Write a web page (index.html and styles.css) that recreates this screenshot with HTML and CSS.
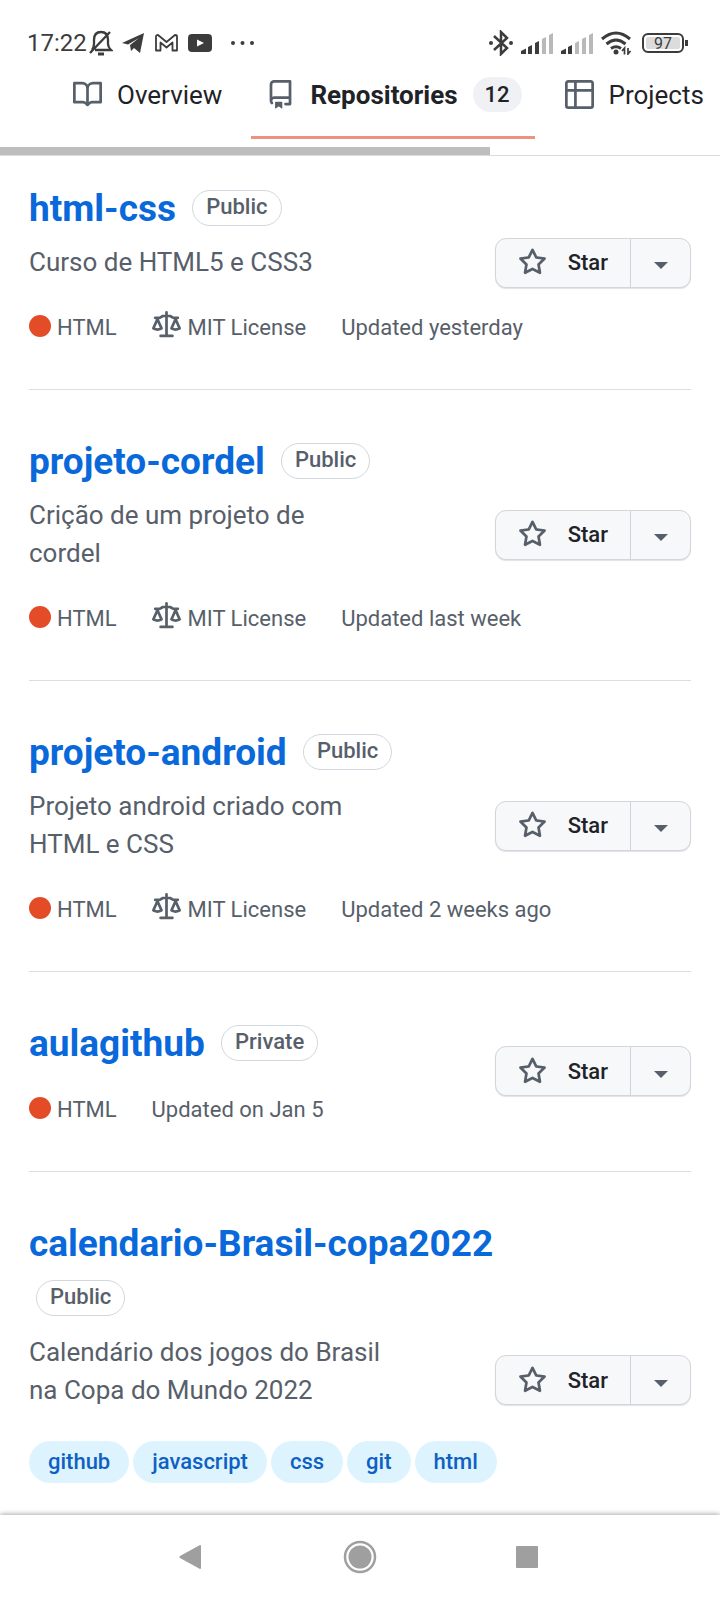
FILE: index.html
```html
<!DOCTYPE html>
<html lang="en">
<head>
<meta charset="utf-8">
<meta name="viewport" content="width=device-width, initial-scale=1">
<title>Repositories</title>
<link rel="stylesheet" href="styles.css">
</head>
<body>
<svg class="sprite" aria-hidden="true">
  <symbol id="star" viewBox="0 0 16 16"><path d="M8 .25a.75.75 0 0 1 .673.418l1.882 3.815 4.21.612a.75.75 0 0 1 .416 1.279l-3.046 2.97.719 4.192a.751.751 0 0 1-1.088.791L8 12.347l-3.766 1.98a.75.75 0 0 1-1.088-.79l.72-4.194L.818 6.374a.75.75 0 0 1 .416-1.28l4.21-.611L7.327.668A.75.75 0 0 1 8 .25Zm0 2.445L6.615 5.5a.75.75 0 0 1-.564.41l-3.097.45 2.24 2.184a.75.75 0 0 1 .216.664l-.528 3.084 2.769-1.456a.75.75 0 0 1 .698 0l2.77 1.456-.53-3.084a.75.75 0 0 1 .216-.664l2.24-2.183-3.096-.45a.75.75 0 0 1-.564-.41L8 2.694Z"/></symbol>
  <symbol id="law" viewBox="0 0 16 16"><path d="M8.75.75V2h.985c.304 0 .603.08.867.231l1.29.736c.038.022.08.033.124.033h2.234a.75.75 0 0 1 0 1.5h-.427l2.111 4.692a.75.75 0 0 1-.154.838l-.53-.53.529.531-.001.002-.002.002-.006.006-.006.005-.01.01-.045.04c-.21.176-.441.327-.686.45C14.556 10.78 13.88 11 13 11a4.498 4.498 0 0 1-2.023-.454 3.544 3.544 0 0 1-.686-.45l-.045-.04-.016-.015-.006-.006-.004-.004v-.001a.75.75 0 0 1-.154-.838L12.178 4.5h-.162c-.305 0-.604-.079-.868-.231l-1.29-.736a.245.245 0 0 0-.124-.033H8.75V13h2.5a.75.75 0 0 1 0 1.5h-6.5a.75.75 0 0 1 0-1.5h2.5V3.5h-.984a.245.245 0 0 0-.124.033l-1.289.737c-.265.15-.564.23-.869.23h-.162l2.112 4.692a.75.75 0 0 1-.154.838l-.53-.53.529.531-.001.002-.002.002-.006.006-.016.015-.045.04c-.21.176-.441.327-.686.45C4.556 10.78 3.88 11 3 11a4.498 4.498 0 0 1-2.023-.454 3.544 3.544 0 0 1-.686-.45l-.045-.04-.016-.015-.006-.006-.004-.004v-.001a.75.75 0 0 1-.154-.838L2.178 4.5H1.75a.75.75 0 0 1 0-1.5h2.234a.249.249 0 0 0 .125-.033l1.288-.737c.265-.15.564-.23.869-.23h.984V.75a.75.75 0 0 1 1.5 0Zm2.945 8.477c.285.135.718.273 1.305.273s1.02-.138 1.305-.273L13 6.327Zm-10 0c.285.135.718.273 1.305.273s1.02-.138 1.305-.273L3 6.327Z"/></symbol>
</svg>

<div class="status">
  <div class="status-group">
    <span class="clock">17:22</span>
    <svg class="s-bell" viewBox="0 0 24 26" width="24" height="26" fill="none" stroke="#3c3c3c" stroke-width="2"><path d="M6 20H22Q19 17 19 14V10Q19 2 12 2Q5 2 5 10V14Q5 17 3 20M1 23 21 2" stroke-width="2.300"/><path d="M9 24h6" stroke-width="3"/></svg>
    <svg class="s-plane" viewBox="0 0 22 20" width="22" height="20" fill="#3c3c3c"><path d="M0 10 22 0 18 20 12 15 9 18 8 12 17 5 6 11.500Z"/></svg>
    <svg class="s-mail" viewBox="0 0 23 18" width="23" height="18" fill="none" stroke="#3c3c3c" stroke-width="1.800" stroke-linejoin="round"><path d="M1 16.500V2.500Q1 1 3 1L11.500 8 20 1Q22 1 22 2.500V16.500H17.500V8.500L11.500 13.500 5.500 8.500V16.500Z"/></svg>
    <svg class="s-video" viewBox="0 0 24 18" width="24" height="18"><rect width="24" height="18" rx="4" fill="#3c3c3c"/><path d="M9 5.500 16 9 9 12.500Z" fill="#fff"/></svg>
    <svg class="s-dots" viewBox="0 0 24 4" width="24" height="4" fill="#3c3c3c"><circle cx="2" cy="2" r="2"/><circle cx="11.500" cy="2" r="2"/><circle cx="21" cy="2" r="2"/></svg>
  </div>
  <div class="status-group status-right">
    <svg viewBox="0 0 24 26" width="24" height="26" fill="none" stroke="#3c3c3c" stroke-width="2.500"><path d="M5 6 18 18 12 24V2L18 8 5 20"/><g fill="#3c3c3c" stroke="none"><circle cx="2" cy="13" r="2"/><circle cx="22" cy="13" r="2"/></g></svg>
    <svg viewBox="0 0 32 21" width="32" height="21" fill="#3c3c3c"><path d="M0 21V18L5 15.500V21ZM7 21V14L11 12V21ZM14 21V10L18 8V21Z"/><path fill="#b9b9b9" d="M21 21V6L25 4V21ZM28 21V2L32 0V21Z"/></svg>
    <svg viewBox="0 0 32 21" width="32" height="21" fill="#3c3c3c"><path d="M0 21V18L5 15.500V21ZM7 21V14L11 12V21Z"/><path fill="#b9b9b9" d="M14 21V10L18 8V21ZM21 21V6L25 4V21ZM28 21V2L32 0V21Z"/></svg>
    <svg viewBox="0 0 31 24" width="31" height="24" fill="none" stroke="#3c3c3c" stroke-width="3"><path d="M1 8Q15 -4 29 8M5.500 13Q15 5 24.500 13M10 17.500Q15 14 20 17.500"/><circle cx="15" cy="21" r="2.500" fill="#3c3c3c" stroke="none"/><path d="M23.500 23.500V17L21 20M27 17V23L29.500 20" stroke-width="1.700"/></svg>
    <span class="battery">97</span>
  </div>
</div>

<nav class="tabs" aria-label="User">
  <a class="tab" href="#"><svg viewBox="0 0 16 16" width="29" height="29"><path d="M0 1.750A.75.75 0 0 1 .75 1h4.253c1.227 0 2.317.59 3 1.501A3.744 3.744 0 0 1 11.006 1h4.245a.75.75 0 0 1 .75.75v10.500a.75.75 0 0 1-.75.75h-4.507a2.250 2.250 0 0 0-1.591.659l-.622.621a.75.75 0 0 1-1.060 0l-.622-.621A2.250 2.250 0 0 0 5.258 13H.75a.75.75 0 0 1-.75-.75Zm7.251 10.324.004-5.073-.002-2.253A2.250 2.250 0 0 0 5.003 2.500H1.500v9h3.757a3.750 3.750 0 0 1 1.994.574ZM8.755 4.750l-.004 7.322a3.752 3.752 0 0 1 1.992-.572H14.500v-9h-3.495a2.250 2.250 0 0 0-2.250 2.250Z"/></svg>Overview</a>
  <a class="tab current" href="#" aria-current="page"><svg viewBox="0 0 16 16" width="29" height="29"><path d="M2 2.500A2.500 2.500 0 0 1 4.500 0h8.750a.75.75 0 0 1 .75.75v12.500a.75.75 0 0 1-.75.75h-2.500a.75.75 0 0 1 0-1.500h1.750v-2h-8a1 1 0 0 0-.714 1.700.75.75 0 1 1-1.072 1.050A2.495 2.495 0 0 1 2 11.500Zm10.500-1h-8a1 1 0 0 0-1 1v6.708A2.486 2.486 0 0 1 4.500 9h8ZM5 12.250a.25.25 0 0 1 .25-.25h3.500a.25.25 0 0 1 .25.25v3.250a.25.25 0 0 1-.4.2l-1.450-1.087a.249.249 0 0 0-.3 0L5.400 15.700a.25.25 0 0 1-.4-.2Z"/></svg>Repositories<span class="counter">12</span></a>
  <a class="tab" href="#"><svg viewBox="0 0 16 16" width="29" height="29"><path d="M0 1.750C0 .784.784 0 1.750 0h12.500C15.216 0 16 .784 16 1.750v12.500A1.750 1.750 0 0 1 14.250 16H1.750A1.750 1.750 0 0 1 0 14.250ZM6.500 6.500v8h7.750a.25.25 0 0 0 .25-.25V6.500Zm8-1.500V1.750a.25.25 0 0 0-.25-.25H6.500V5Zm-13 1.500v7.750c0 .138.112.25.25.25H5v-8ZM5 5V1.500H1.750a.25.25 0 0 0-.25.25V5Z"/></svg>Projects</a>
</nav>
<div class="scroll-track"><div class="scroll-thumb"></div></div>

<main class="repos">
  <article class="repo">
    <div class="info">
      <h3><a href="#">html-css</a> <span class="pill">Public</span></h3>
      <p class="desc">Curso de HTML5 e CSS3</p>
      <div class="meta"><span class="lang">HTML</span><span class="license"><svg width="29" height="29"><use href="#law"/></svg>MIT License</span><span>Updated yesterday</span></div>
    </div>
    <div class="star-group"><button class="star"><svg width="29" height="29"><use href="#star"/></svg>Star</button><button class="caret" aria-label="Add to list"></button></div>
  </article>
  <article class="repo">
    <div class="info">
      <h3><a href="#">projeto-cordel</a> <span class="pill">Public</span></h3>
      <p class="desc">Crição de um projeto de cordel</p>
      <div class="meta"><span class="lang">HTML</span><span class="license"><svg width="29" height="29"><use href="#law"/></svg>MIT License</span><span>Updated last week</span></div>
    </div>
    <div class="star-group"><button class="star"><svg width="29" height="29"><use href="#star"/></svg>Star</button><button class="caret" aria-label="Add to list"></button></div>
  </article>
  <article class="repo">
    <div class="info">
      <h3><a href="#">projeto-android</a> <span class="pill">Public</span></h3>
      <p class="desc">Projeto android criado com HTML e CSS</p>
      <div class="meta"><span class="lang">HTML</span><span class="license"><svg width="29" height="29"><use href="#law"/></svg>MIT License</span><span>Updated 2 weeks ago</span></div>
    </div>
    <div class="star-group"><button class="star"><svg width="29" height="29"><use href="#star"/></svg>Star</button><button class="caret" aria-label="Add to list"></button></div>
  </article>
  <article class="repo">
    <div class="info">
      <h3><a href="#">aulagithub</a> <span class="pill">Private</span></h3>
      <div class="meta"><span class="lang">HTML</span><span>Updated on Jan 5</span></div>
    </div>
    <div class="star-group"><button class="star"><svg width="29" height="29"><use href="#star"/></svg>Star</button><button class="caret" aria-label="Add to list"></button></div>
  </article>
  <article class="repo">
    <div class="info">
      <h3><a href="#">calendario-Brasil-copa2022</a> <span class="pill">Public</span></h3>
      <p class="desc">Calendário dos jogos do Brasil na Copa do Mundo 2022</p>
      <div class="tags"><a href="#">github</a><a href="#">javascript</a><a href="#">css</a><a href="#">git</a><a href="#">html</a></div>
      <div class="meta"><span class="lang other"></span></div>
    </div>
    <div class="star-group"><button class="star"><svg width="29" height="29"><use href="#star"/></svg>Star</button><button class="caret" aria-label="Add to list"></button></div>
  </article>
</main>

<footer class="navbar">
  <button aria-label="Back"><svg viewBox="0 0 34 34" width="34" height="34" fill="#9f9f9f"><path d="M4 16 24 5Q25 5 25 6V28Q25 29 24 29L4 18Q2.500 17 4 16Z"/></svg></button>
  <button aria-label="Home"><svg viewBox="0 0 34 34" width="34" height="34" fill="#9f9f9f"><circle cx="17" cy="17" r="15" fill="none" stroke="#9f9f9f" stroke-width="2.500"/><circle cx="17" cy="17" r="11.500"/></svg></button>
  <button aria-label="Recents"><svg viewBox="0 0 34 34" width="34" height="34" fill="#9f9f9f"><rect x="6" y="6" width="22" height="22" rx="1"/></svg></button>
</footer>
</body>
</html>
```

FILE: styles.css
```css
* { box-sizing: border-box; }

body {
  margin: 0;
  height: 100vh;
  display: flex;
  flex-direction: column;
  overflow: hidden;
  background: #fff;
  color: #1f2328;
  font-family: Roboto, sans-serif;
  font-size: 26px;
}

a { color: inherit; text-decoration: none; }
button { font: inherit; color: inherit; background: none; border: 0; padding: 0; }
svg { flex: none; display: block; }
.sprite { position: absolute; width: 0; height: 0; }

.status {
  display: flex;
  justify-content: space-between;
  align-items: center;
  padding: 28px 36px 0 27px;
  height: 58px;
  flex: none;
  color: #3c3c3c;
}
.status-group { display: flex; align-items: center; }
.status-right { gap: 8px; }
.clock { font-size: 24px; line-height: 28px; }
.s-bell { margin-left: 2px; }
.s-plane { margin-left: 9px; }
.s-mail { margin-left: 11px; }
.s-video { margin-left: 10px; }
.s-dots { margin-left: 19px; }
.battery {
  position: relative;
  width: 42px;
  height: 20px;
  border: 2px solid #3c3c3c;
  border-radius: 6px;
  background: #dcdcdc;
  box-shadow: inset 0 0 0 2px #fff;
  font-size: 16px;
  line-height: 17px;
  text-align: center;
  margin-left: 2px;
}
.battery::after {
  content: "";
  position: absolute;
  right: -6px;
  top: 5px;
  width: 3px;
  height: 6px;
  background: #3c3c3c;
}

.tabs {
  display: flex;
  gap: 15px;
  padding-left: 58px;
  height: 81px;
  flex: none;
  overflow: hidden;
}
.tab {
  display: flex;
  align-items: center;
  gap: 15px;
  padding: 0 14px 5px 15px;
  border-bottom: 3px solid transparent;
  white-space: nowrap;
}
.tab svg { fill: #57606a; }
.tab.current { padding-right: 13px; font-weight: 700; border-color: #ec9280; }
.counter {
  padding: 0 12px;
  border-radius: 18px;
  background: #f0f1f4;
  font-size: 22px;
  font-weight: 500;
  line-height: 35px;
}

.scroll-track { flex: none; margin-top: 8px; border-bottom: 1px solid #d8dbdf; }
.scroll-thumb { width: 68%; height: 8px; background: #bebebe; }

.repos {
  flex: 1;
  min-height: 0;
  overflow: hidden;
  padding: 0 29px;
}
.repo {
  display: flex;
  align-items: center;
  padding: 44px 0 45px;
  border-bottom: 1px solid #d8dee4;
}
.repo:first-child { padding-top: 25px; }
.info { display: flex; flex-direction: column; flex: 1; min-width: 0; }

h3 { margin: 0 0 7px; font-size: 37px; line-height: 55px; font-weight: 700; color: #0969da; }
.pill {
  display: inline-block;
  margin-left: 7px;
  padding: 0 13px 2px;
  border: 1px solid #d0d7de;
  border-radius: 18px;
  color: #57606a;
  font-size: 22px;
  line-height: 32px;
  font-weight: 500;
  vertical-align: 7px;
}
.desc { margin: 0 0 15px; max-width: 352px; line-height: 38px; color: #57606a; }

.meta {
  display: flex;
  gap: 35px;
  margin-top: 15px;
  height: 33px;
  font-size: 22px;
  line-height: 33px;
  color: #57606a;
  white-space: nowrap;
}
.lang, .license { display: flex; gap: 6px; }
.license { gap: 7px; }
.license svg { fill: #57606a; }
.lang::before {
  content: "";
  width: 22px;
  height: 22px;
  margin-top: 4px;
  border-radius: 50%;
  background: #e34c26;
}
.lang.other::before { background: #57606a; }

.tags { display: flex; gap: 4px; margin: 17px 0 13px; white-space: nowrap; }
.tags a {
  padding: 0 19px;
  border-radius: 21px;
  background: #ddf4ff;
  color: #0f60c4;
  font-size: 22px;
  line-height: 42px;
  font-weight: 500;
}

.star-group {
  display: flex;
  flex: none;
  height: 50px;
  border: 1px solid #d3d6da;
  border-radius: 11px;
  background: #f6f8fa;
  box-shadow: 0 1px 1px #dfe2e5;
}
.star {
  display: flex;
  align-items: center;
  gap: 21px;
  padding: 0 22px;
  font-size: 22px;
  font-weight: 500;
}
.star svg { fill: #57606a; }
.caret { width: 60px; border-left: 1px solid #d0d3d7; }
.caret::before {
  content: "";
  display: block;
  width: 0;
  margin: 6px auto 0;
  border: 7px solid transparent;
  border-top-color: #57606a;
  border-bottom: 0;
}

.navbar {
  position: relative;
  display: grid;
  grid-template-columns: repeat(3, 167px);
  justify-content: center;
  height: 85px;
  padding-bottom: 2px;
  flex: none;
  background: #fff;
  box-shadow: 0 -1px 5px #aaa;
}
.navbar button { display: grid; place-items: center; }
```
